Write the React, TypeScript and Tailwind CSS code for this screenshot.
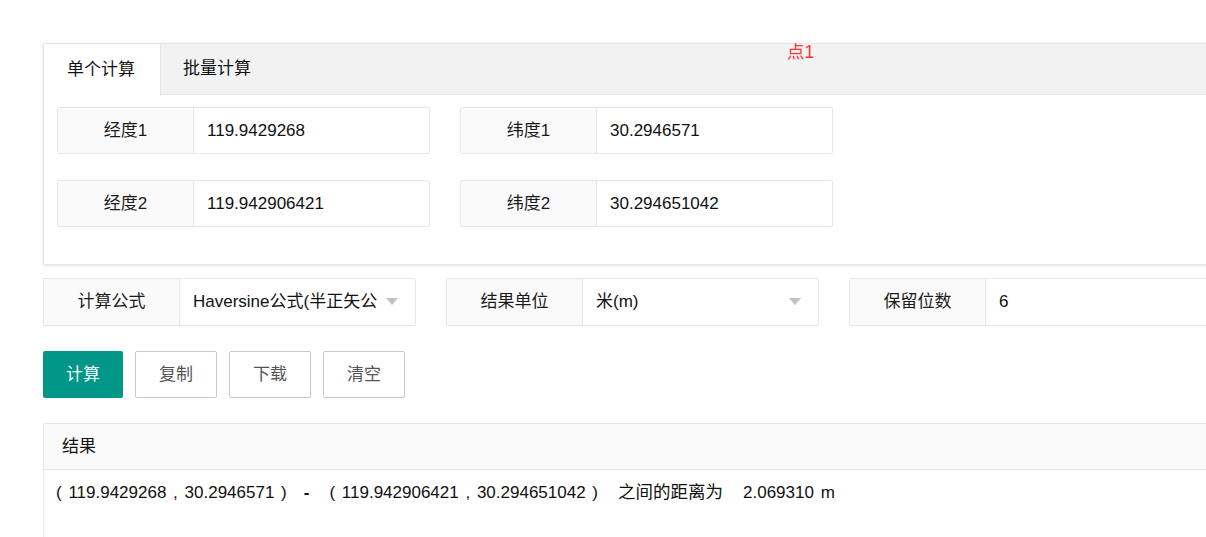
import React from "react";

const font = { fontFamily: '"Liberation Sans", Arial, "Noto Sans CJK SC", sans-serif' };

function Field({ label, value, select, wide, tall }: { label: string; value: string; select?: boolean; wide?: boolean; tall?: boolean }) {
  return (
    <div className={`flex ${tall ? "h-[48px]" : "h-[47px]"} ${wide ? "w-[420px]" : "w-[373px]"} shrink-0 border border-[#e6e6e6] rounded-[2px] bg-white`}>
      <div className="w-[136px] shrink-0 bg-[#fafafa] border-r border-[#e6e6e6] flex items-center justify-center text-[17px] text-[#1a1a1a]">
        {label}
      </div>
      <div className="flex-1 relative flex items-center pl-[13px] text-[17px] text-[#111] whitespace-nowrap">
        <span>{value}</span>
        {select && (
          <svg className="absolute right-[17px] top-[19px]" width="12" height="7" viewBox="0 0 12 7">
            <polygon points="0,0 12,0 6,7" fill="#c2c2c2" />
          </svg>
        )}
      </div>
    </div>
  );
}

export default function App() {
  return (
    <div className="w-[1206px] h-[537px] overflow-hidden bg-white relative" style={font}>
      <div className="pt-[43px] pl-[43px] w-[1250px]">
        {/* Tab card */}
        <div className="border border-[#e6e6e6] rounded-[2px] shadow-[0_1px_4px_rgba(0,0,0,0.12)] bg-white h-[222px]">
          <div className="flex h-[51px] bg-[#f2f2f2] border-b border-[#e6e6e6]">
            <div className="w-[117px] h-[52px] bg-white flex items-center pl-[23px] text-[17px] text-[#111] border-r border-[#e6e6e6]">
              单个计算
            </div>
            <div className="flex items-center pl-[22px] text-[17px] text-[#111]">批量计算</div>
          </div>
          <div className="pl-[13px] pt-[12px] flex flex-col gap-[26px]">
            <div className="flex gap-[30px]">
              <Field label="经度1" value="119.9429268" />
              <Field label="纬度1" value="30.2946571" />
            </div>
            <div className="flex gap-[30px]">
              <Field label="经度2" value="119.942906421" />
              <Field label="纬度2" value="30.294651042" />
            </div>
          </div>
        </div>

        {/* Options row */}
        <div className="flex gap-[30px] mt-[13px]">
          <Field label="计算公式" value="Haversine公式(半正矢公" select tall />
          <Field label="结果单位" value="米(m)" select tall />
          <Field label="保留位数" value="6" wide tall />
        </div>

        {/* Buttons */}
        <div className="flex gap-[12px] mt-[25px]">
          <button className="w-[80px] h-[47px] bg-[#009688] text-white text-[17px] rounded-[2px]">计算</button>
          <button className="w-[82px] h-[47px] border border-[#c9c9c9] text-[#555] text-[17px] rounded-[2px] bg-white">复制</button>
          <button className="w-[82px] h-[47px] border border-[#c9c9c9] text-[#555] text-[17px] rounded-[2px] bg-white">下载</button>
          <button className="w-[82px] h-[47px] border border-[#c9c9c9] text-[#555] text-[17px] rounded-[2px] bg-white">清空</button>
        </div>

        {/* Result */}
        <div className="mt-[25px] border border-[#e6e6e6] rounded-[2px] h-[200px]">
          <div className="h-[46px] bg-[#fafafa] border-b border-[#e6e6e6] flex items-center pl-[18px] text-[17px] text-[#111]">
            结果
          </div>
          <div className="pl-[12px] pt-[9px] text-[17px] text-[#111] whitespace-nowrap [word-spacing:2px]">
            <span>( 119.9429268 , 30.2946571 )</span>
            <span className="font-bold ml-[17px] mr-[20px]">-</span>
            <span>( 119.942906421 , 30.294651042 )</span>
            <span className="ml-[20px] text-[17.5px]">之间的距离为</span>
            <span className="ml-[20px]">2.069310 m</span>
          </div>
        </div>
      </div>
      <div className="absolute left-[787px] top-[39px] text-[17.5px] text-[#ff3333]">点1</div>
    </div>
  );
}
